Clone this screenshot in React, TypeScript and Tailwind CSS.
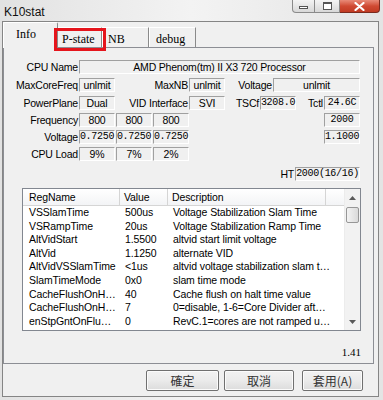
import React from "react";

const SANS = "font-['Liberation_Sans',Arial,sans-serif]";

interface Row {
	name: string;
	value: string;
	desc: string;
}

const ROWS: Row[] = [
	{ name: "VSSlamTime", value: "500us", desc: "Voltage Stabilization Slam Time" },
	{ name: "VSRampTime", value: "20us", desc: "Voltage Stabilization Ramp Time" },
	{ name: "AltVidStart", value: "1.5500", desc: "altvid start limit voltage" },
	{ name: "AltVid", value: "1.1250", desc: "alternate VID" },
	{ name: "AltVidVSSlamTime", value: "<1us", desc: "altvid voltage stabilization slam t…" },
	{ name: "SlamTimeMode", value: "0x0", desc: "slam time mode" },
	{ name: "CacheFlushOnH…", value: "40", desc: "Cache flush on halt time value" },
	{ name: "CacheFlushOnH…", value: "7", desc: "0=disable, 1-6=Core Divider aft…" },
	{ name: "enStpGntOnFlu…", value: "0", desc: "RevC.1=cores are not ramped u…" },
];

function Field({
	w,
	mono,
	children,
}: {
	w: string;
	mono?: boolean;
	children?: React.ReactNode;
}) {
	return (
		<div
			className={`${w} h-[14px] shrink-0 border border-t-[#a0a0a0] border-l-[#a0a0a0] border-r-white border-b-white bg-[#f0f0f0] flex items-center justify-center leading-none whitespace-nowrap ${
				mono ? "font-['Liberation_Mono',monospace] text-[10px] tracking-[-0.3px]" : ""
			}`}
		>
			{children}
		</div>
	);
}

function Label({ w, children }: { w: string; children: React.ReactNode }) {
	return (
		<div className={`${w} shrink-0 text-right pr-px leading-[14px] whitespace-nowrap`}>
			{children}
		</div>
	);
}

function TitleBar() {
	return (
		<div className="h-[21px] flex justify-between bg-gradient-to-r from-[#e2e2e2] via-[#f3f3f3] to-[#e4e4e4]">
			<div className={`${SANS} text-[12px] pl-[4px] pt-[3px] text-[#111]`}>K10stat</div>
			<div className="flex items-start pr-[3px]">
				<div className="w-[23px] h-[13px] rounded-bl-[4px] border border-t-0 border-[#8a8a8a] bg-gradient-to-b from-[#f4f4f4] to-[#d8d8d8] flex items-center justify-center">
					<div className="w-[9px] h-[3px] border border-[#555] bg-white mt-[3px]" />
				</div>
				<div className="w-[25px] h-[13px] border border-t-0 border-l-0 border-[#8a8a8a] bg-gradient-to-b from-[#f4f4f4] to-[#d8d8d8] flex items-center justify-center">
					<div className="w-[9px] h-[8px] border border-[#555] border-t-2 bg-white" />
				</div>
				<div className="w-[40px] h-[13px] rounded-br-[4px] border border-t-0 border-l-0 border-[#7a2a1e] bg-gradient-to-b from-[#e88a78] via-[#d04a33] to-[#c13a22] flex items-center justify-center">
					<svg width="11" height="9" viewBox="0 0 11 9">
						<path d="M1.5 1 L9.5 8 M9.5 1 L1.5 8" stroke="#fff" strokeWidth="2.2" strokeLinecap="round" />
					</svg>
				</div>
			</div>
		</div>
	);
}

function Tabs() {
	return (
		<div className="h-[25px] flex items-end font-['Liberation_Serif','Times_New_Roman',serif] text-[12px] text-black">
			<div className="relative z-10 w-[55px] h-[26px] -mb-px bg-[#f0f0f0] border-l border-t border-r border-l-white border-t-white border-r-[#8a8a8a] rounded-t-[2px] pl-[12px] pt-[2px]">
				Info
			</div>
			<div className="relative z-20 w-[44px] h-[20px] border-t border-r border-t-white border-r-[#8a8a8a] pl-[4px] pt-[2px]">
				P-state
				<div className="absolute -left-[4px] -right-[5px] top-0 -bottom-[4px] border-[3px] border-[#e5151c]" />
			</div>
			<div className="w-[47px] h-[20px] border-l border-t border-r border-l-white border-t-white border-r-[#8a8a8a] pl-[5px] pt-[2px]">
				NB
			</div>
			<div className="w-[47px] h-[20px] border-l border-t border-r border-l-white border-t-white border-r-[#8a8a8a] pl-[6px] pt-[2px]">
				debug
			</div>
		</div>
	);
}

function InfoFields() {
	return (
		<div className={`${SANS} text-[10.5px] tracking-[-0.2px] text-black`}>
			<div className="flex mt-[12px]">
				<Label w="w-[75px]">CPU Name</Label>
				<Field w="w-[281px]">AMD Phenom(tm) II X3 720 Processor</Field>
			</div>
			<div className="flex mt-[4px]">
				<Label w="w-[75px]">MaxCoreFreq</Label>
				<Field w="w-[36px]">unlmit</Field>
				<Label w="w-[74px]">MaxNB</Label>
				<Field w="w-[36px]">unlmit</Field>
				<Label w="w-[48px]">Voltage</Label>
				<Field w="w-[87px]">unlmit</Field>
			</div>
			<div className="flex mt-[4px]">
				<Label w="w-[75px]">PowerPlane</Label>
				<Field w="w-[36px]">Dual</Field>
				<Label w="w-[74px]">VID Interface</Label>
				<Field w="w-[36px]">SVI</Field>
				<Label w="w-[35px]">TSCf</Label>
				<Field w="w-[36px]" mono>
					3208.0
				</Field>
				<Label w="w-[28px]">Tctl</Label>
				<Field w="w-[36px]" mono>
					24.6C
				</Field>
			</div>
			<div className="flex mt-[3px]">
				<Label w="w-[75px]">Frequency</Label>
				<Field w="w-[36px]">800</Field>
				<div className="w-px shrink-0" />
				<Field w="w-[36px]">800</Field>
				<div className="w-px shrink-0" />
				<Field w="w-[36px]">800</Field>
				<div className="w-[135px] shrink-0" />
				<Field w="w-[36px]" mono>
					2000
				</Field>
			</div>
			<div className="flex mt-[3px]">
				<Label w="w-[75px]">Voltage</Label>
				<Field w="w-[36px]" mono>
					0.7250
				</Field>
				<div className="w-px shrink-0" />
				<Field w="w-[36px]" mono>
					0.7250
				</Field>
				<div className="w-px shrink-0" />
				<Field w="w-[36px]" mono>
					0.7250
				</Field>
				<div className="w-[135px] shrink-0" />
				<Field w="w-[36px]" mono>
					1.1000
				</Field>
			</div>
			<div className="flex mt-[3px]">
				<Label w="w-[75px]">CPU Load</Label>
				<Field w="w-[36px]">9%</Field>
				<div className="w-px shrink-0" />
				<Field w="w-[36px]">7%</Field>
				<div className="w-px shrink-0" />
				<Field w="w-[36px]">2%</Field>
			</div>
			<div className="flex mt-[6px]">
				<div className="w-[276px] shrink-0" />
				<Label w="w-[15px]">HT</Label>
				<Field w="w-[65px]" mono>
					2000(16/16)
				</Field>
			</div>
		</div>
	);
}

function RegList() {
	return (
		<div className={`${SANS} text-[10.5px] tracking-[-0.1px] text-black ml-[18px] mt-[7px] w-[339px] h-[143px] border border-[#828790] bg-white flex`}>
			<div className="flex-1 flex flex-col">
				<div className="h-[17px] flex bg-gradient-to-b from-white to-[#f3f4f6] border-b border-[#d5d5d5] leading-[16px]">
					<div className="w-[97px] pl-[6px] border-r border-[#d5d5d5]">RegName</div>
					<div className="w-[48px] pl-[4px] border-r border-[#d5d5d5]">Value</div>
					<div className="w-[158px] pl-[4px] border-r border-[#d5d5d5]">Description</div>
				</div>
				{ROWS.map((r, i) => (
					<div key={i} className="h-[13.6px] leading-[13.6px] flex whitespace-nowrap">
						<div className="w-[97px] pl-[6px]">{r.name}</div>
						<div className="w-[48px] pl-[5px]">{r.value}</div>
						<div className="flex-1 pl-[5px] overflow-hidden">{r.desc}</div>
					</div>
				))}
			</div>
			<div className="w-[16px] flex flex-col bg-[#f2f2f2] border-l border-[#ececec]">
				<div className="h-[17px] flex items-center justify-center">
					<svg width="7" height="4" viewBox="0 0 7 4">
						<path d="M0 4 L3.5 0 L7 4 Z" fill="#5a5a5a" />
					</svg>
				</div>
				<div className="mt-[1px] mx-[1px] h-[16px] rounded-[2px] border border-[#979797] bg-gradient-to-r from-[#f3f3f3] to-[#dadada]" />
				<div className="flex-1" />
				<div className="h-[17px] flex items-center justify-center">
					<svg width="7" height="4" viewBox="0 0 7 4">
						<path d="M0 0 L3.5 4 L7 0 Z" fill="#5a5a5a" />
					</svg>
				</div>
			</div>
		</div>
	);
}

function Btn({ w, children }: { w: string; children: React.ReactNode }) {
	return (
		<div
			className={`${w} h-[21px] shrink-0 rounded-[2px] border border-[#707070] bg-gradient-to-b from-[#f2f2f2] via-[#ebebeb] to-[#dcdcdc] shadow-[inset_0_0_0_1px_#fbfbfb] flex items-center justify-center font-['Noto_Sans_CJK_TC','Noto_Sans_CJK_SC',sans-serif] text-[12px] text-[#333]`}
		>
			{children}
		</div>
	);
}

export default function App() {
	return (
		<div className="w-[383px] h-[400px] overflow-hidden bg-gradient-to-r from-[#e2e2e2] via-[#f3f3f3] to-[#e4e4e4]">
			<TitleBar />
			<div className="ml-[2px] w-[377px] h-[376px] border border-[#858585] bg-[#f0f0f0]">
				<Tabs />
				<div className="w-[371px] h-[317px] border border-[#8c8e94] bg-[#f0f0f0]">
					<InfoFields />
					<RegList />
					<div className="mt-[15px] pr-[12px] text-right font-['Liberation_Serif','Times_New_Roman',serif] text-[11px] leading-[13px] text-black">
						1.41
					</div>
				</div>
				<div className="flex mt-[6px] ml-[143px]">
					<Btn w="w-[73px]">確定</Btn>
					<div className="w-[5px] shrink-0" />
					<Btn w="w-[70px]">取消</Btn>
					<div className="w-[8px] shrink-0" />
					<Btn w="w-[61px]">套用(A)</Btn>
				</div>
			</div>
		</div>
	);
}
